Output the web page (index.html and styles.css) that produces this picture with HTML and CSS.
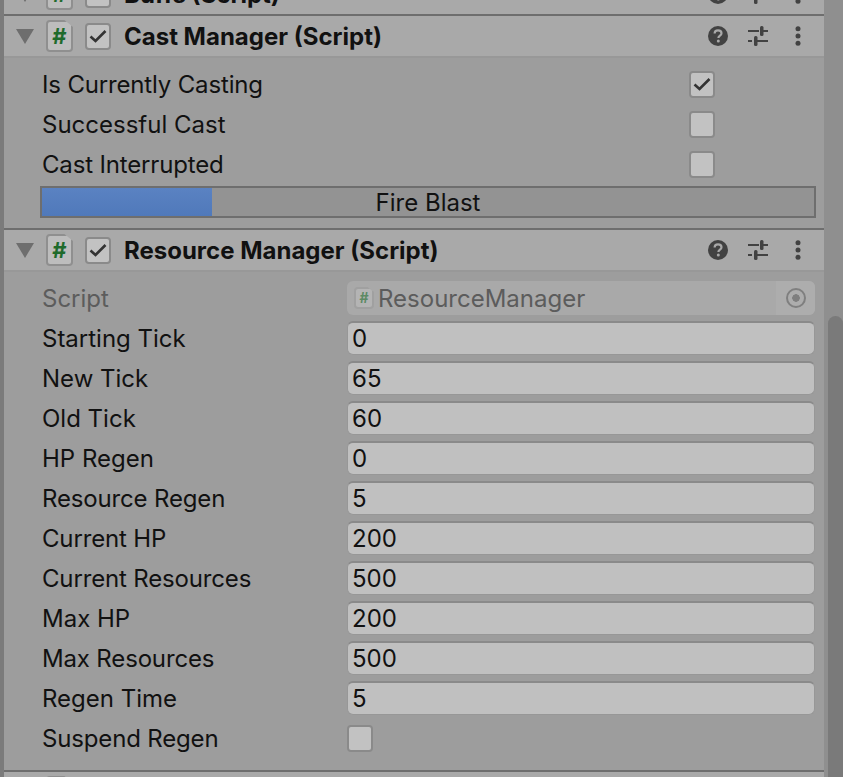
FILE: index.html
```html
<!DOCTYPE html>
<html lang="en">

<head>
    <meta charset="UTF-8">
    <meta name="viewport" content="width=device-width, initial-scale=1.0">
    <title>Inspector</title>
    <link rel="stylesheet" href="styles.css">
</head>

<body>
    <svg class="icon-defs" width="0" height="0">
        <defs>
            <symbol id="icon-help" viewBox="0 0 20 20">
                <circle cx="10" cy="10" r="10" fill="#424242" />
                <path d="M6.6 7.6 C6.6 5.5 8 4.4 10 4.4 C12 4.4 13.5 5.5 13.5 7.3 C13.5 9.6 10.4 9.6 10.4 12" fill="none" stroke="#a9a9a9" stroke-width="2.2" />
                <circle cx="10.3" cy="15" r="1.5" fill="#a9a9a9" />
            </symbol>
            <symbol id="icon-sliders" viewBox="0 0 20 20">
                <path d="M0 5H11M15 5H20M0 15H4M8 15H20" stroke="#424242" stroke-width="2" />
                <rect x="12" y="0" width="3.5" height="10" rx="1.5" fill="#424242" />
                <rect x="6" y="10" width="3.5" height="10" rx="1.5" fill="#424242" />
            </symbol>
            <symbol id="icon-dots" viewBox="0 0 6 20">
                <circle cx="3" cy="2.8" r="2.5" fill="#424242" />
                <circle cx="3" cy="10" r="2.5" fill="#424242" />
                <circle cx="3" cy="17.2" r="2.5" fill="#424242" />
            </symbol>
            <symbol id="icon-check" viewBox="0 0 18 14">
                <path d="M1.5 7.5 L6.5 12 L16.5 2" fill="none" stroke="#333" stroke-width="2.6" />
            </symbol>
        </defs>
    </svg>

    <div class="window">
        <div class="edge"></div>

        <main class="inspector">
            <!-- cut off by the top of the window -->
            <div class="clip-top">
                <header class="comp-header">
                    <span class="foldout"></span>
                    <span class="script-icon">#</span>
                    <span class="toggle"></span>
                    <h2>Buffs (Script)</h2>
                    <span class="tools">
                        <svg class="tool"><use href="#icon-help" /></svg>
                        <svg class="tool"><use href="#icon-sliders" /></svg>
                        <svg class="tool-dots"><use href="#icon-dots" /></svg>
                    </span>
                </header>
            </div>

            <section class="component">
                <header class="comp-header">
                    <span class="foldout"></span>
                    <span class="script-icon">#</span>
                    <span class="toggle"><svg class="check"><use href="#icon-check" /></svg></span>
                    <h2>Cast Manager (Script)</h2>
                    <span class="tools">
                        <svg class="tool"><use href="#icon-help" /></svg>
                        <svg class="tool"><use href="#icon-sliders" /></svg>
                        <svg class="tool-dots"><use href="#icon-dots" /></svg>
                    </span>
                </header>
                <div class="comp-body cast-body">
                    <div class="row wide">
                        <label class="tight">Is Currently Casting</label>
                        <span class="toggle"><svg class="check"><use href="#icon-check" /></svg></span>
                    </div>
                    <div class="row wide">
                        <label>Successful Cast</label>
                        <span class="toggle"></span>
                    </div>
                    <div class="row wide">
                        <label class="tight">Cast Interrupted</label>
                        <span class="toggle"></span>
                    </div>
                    <div class="progress">
                        <div class="progress-fill" style="width: 22%"></div>
                        <span class="progress-text">Fire Blast</span>
                    </div>
                </div>
            </section>

            <section class="component">
                <header class="comp-header">
                    <span class="foldout"></span>
                    <span class="script-icon">#</span>
                    <span class="toggle"><svg class="check"><use href="#icon-check" /></svg></span>
                    <h2>Resource Manager (Script)</h2>
                    <span class="tools">
                        <svg class="tool"><use href="#icon-help" /></svg>
                        <svg class="tool"><use href="#icon-sliders" /></svg>
                        <svg class="tool-dots"><use href="#icon-dots" /></svg>
                    </span>
                </header>
                <div class="comp-body">
                    <div class="row">
                        <label class="disabled">Script</label>
                        <div class="object-field">
                            <span class="script-icon small">#</span>
                            <span class="object-name">ResourceManager</span>
                            <span class="picker"><span class="picker-ring"></span></span>
                        </div>
                    </div>
                    <div class="row"><label>Starting Tick</label><div class="field">0</div></div>
                    <div class="row"><label>New Tick</label><div class="field">65</div></div>
                    <div class="row"><label>Old Tick</label><div class="field">60</div></div>
                    <div class="row"><label>HP Regen</label><div class="field">0</div></div>
                    <div class="row"><label class="tight">Resource Regen</label><div class="field">5</div></div>
                    <div class="row"><label class="tight">Current HP</label><div class="field">200</div></div>
                    <div class="row"><label class="tight">Current Resources</label><div class="field">500</div></div>
                    <div class="row"><label>Max HP</label><div class="field">200</div></div>
                    <div class="row"><label class="tight">Max Resources</label><div class="field">500</div></div>
                    <div class="row"><label>Regen Time</label><div class="field">5</div></div>
                    <div class="row"><label class="tight">Suspend Regen</label><span class="toggle"></span></div>
                </div>
            </section>

            <section class="component">
                <header class="comp-header">
                    <span class="foldout"></span>
                    <span class="script-icon"></span>
                    <span class="toggle"></span>
                </header>
            </section>
        </main>

        <div class="scroll-gutter"></div>
        <div class="scrollbar">
            <div class="scroll-thumb"></div>
        </div>
    </div>
</body>

</html>
```

FILE: styles.css
```css
/* page */
html,
body {
    margin: 0;
    padding: 0;
    height: 100%;
    overflow: hidden;
}

body {
    font-family: Inter, "Liberation Sans", sans-serif;
    font-size: 24px;
    color: #111;
    background-color: #9d9d9d;
}

.icon-defs {
    position: absolute;
}

.window {
    display: flex;
    height: 777px;
}

.edge {
    width: 4px;
    background-color: #7b7b7b;
}

.inspector {
    width: 820px;
    overflow: hidden;
    background-color: #9d9d9d;
}

.scroll-gutter {
    width: 4px;
    background-color: #8f8f8f;
}

.scrollbar {
    width: 15px;
    padding-top: 316px;
    background-color: #8f8f8f;
}

.scroll-thumb {
    height: 461px;
    border-radius: 8px 8px 0 0;
    background-color: #7a7a7a;
}

/* component header */
.clip-top {
    height: 14px;
    display: flex;
    align-items: flex-end;
    overflow: hidden;
}

.clip-top .comp-header {
    flex: 1;
    flex-shrink: 0;
    border-bottom: none;
}

.component {
    border-top: 2px solid #6e6e6e;
}

.comp-header {
    display: flex;
    align-items: center;
    height: 40px;
    padding-left: 12px;
    padding-right: 8px;
    background-color: #a9a9a9;
    border-bottom: 2px solid #989898;
}

.comp-header h2 {
    margin: 0 0 0 13px;
    font-size: 24px;
    font-weight: 700;
}

.foldout {
    width: 0;
    height: 0;
    margin-right: 12px;
    border-left: 9px solid transparent;
    border-right: 9px solid transparent;
    border-top: 15px solid #6e6e6e;
}

.script-icon {
    display: flex;
    align-items: center;
    justify-content: center;
    width: 27px;
    height: 32px;
    box-sizing: border-box;
    border: 2px solid #8f8f8f;
    border-radius: 4px;
    background-color: #bdbdbd;
    color: #1f6b2c;
    font-weight: 700;
    font-size: 22px;
    line-height: 1;
    clip-path: polygon(0 0, 68% 0, 100% 22%, 100% 100%, 0 100%);
}

.script-icon.small {
    width: 20px;
    height: 22px;
    flex-shrink: 0;
    font-size: 14px;
    color: #5d8a64;
    background-color: #b4b4b4;
    border-color: #a0a0a0;
}

.comp-header .toggle {
    margin-left: 12px;
}

.toggle {
    display: flex;
    align-items: center;
    justify-content: center;
    box-sizing: border-box;
    width: 26px;
    height: 27px;
    border: 2px solid #8a8a8a;
    border-radius: 4px;
    background-color: #c2c2c2;
}

.check {
    width: 18px;
    height: 14px;
}

.tools {
    display: flex;
    align-items: center;
    margin-left: auto;
    margin-right: 15px;
    gap: 20px;
}

.tool {
    width: 20px;
    height: 20px;
}

.tool-dots {
    width: 6px;
    height: 20px;
    margin-left: 7px;
}

/* component body */
.comp-body {
    padding: 6px 9px 12px 38px;
}

.cast-body {
    padding-left: 0;
    padding-right: 8px;
    padding-bottom: 10px;
}

.row {
    display: grid;
    grid-template-columns: 305px 1fr;
    align-items: center;
    height: 40px;
}

.row.wide {
    grid-template-columns: 647px 1fr;
    padding-left: 38px;
}

.tight {
    letter-spacing: -0.16px;
}

.disabled {
    color: #5c5c5c;
}

.field {
    display: flex;
    align-items: center;
    box-sizing: border-box;
    height: 34px;
    padding-left: 4px;
    border: 1px solid #979797;
    border-top: 2px solid #8a8a8a;
    border-radius: 6px;
    background-color: #c0c0c0;
}

.row .toggle {
    justify-self: start;
}

.object-field {
    display: flex;
    align-items: center;
    box-sizing: border-box;
    height: 34px;
    padding-left: 7px;
    border-radius: 6px;
    background-color: #a9a9a9;
    color: #5c5c5c;
}

.object-name {
    margin-left: 4px;
}

.picker {
    display: flex;
    align-items: center;
    justify-content: center;
    margin-left: auto;
    width: 39px;
    height: 100%;
    background-color: #adadad;
    border-radius: 0 6px 6px 0;
}

.picker-ring {
    display: flex;
    box-sizing: border-box;
    width: 20px;
    height: 20px;
    border: 2px solid #7f7f7f;
    border-radius: 50%;
    background: radial-gradient(circle, #7f7f7f 0, #7f7f7f 3.5px, transparent 4px);
}

/* cast bar */
.progress {
    position: relative;
    display: flex;
    align-items: center;
    justify-content: center;
    box-sizing: border-box;
    height: 32px;
    margin: 2px 0 0 36px;
    border: 2px solid #6e6e6e;
    background-color: #939393;
}

.progress-fill {
    position: absolute;
    left: 0;
    top: 0;
    bottom: 0;
    background: linear-gradient(#5a82c2, #5079ba);
}

.progress-text {
    position: relative;
}
```
